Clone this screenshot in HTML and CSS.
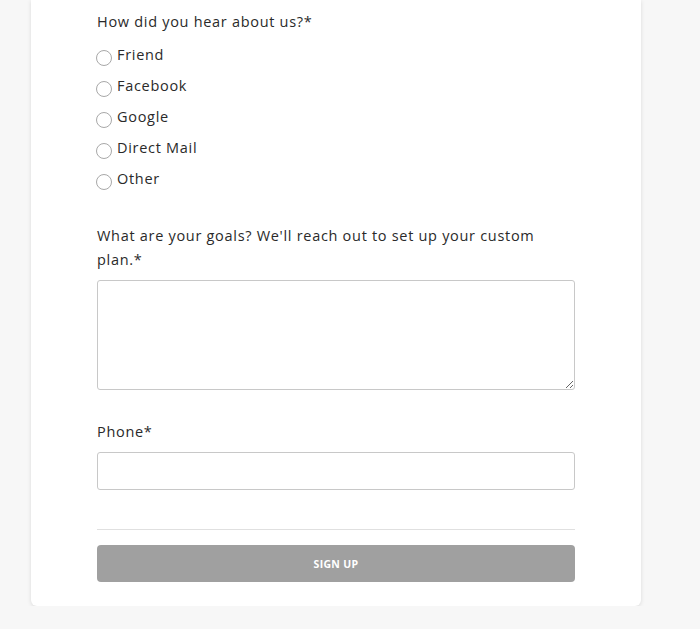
FILE: index.html
```html
<!DOCTYPE html>
<html>
<head>
<meta charset="utf-8">
<link rel="stylesheet" href="styles.css">
</head>
<body>
<div class="card">
  <form class="form">
    <div class="label">How did you hear about us?*</div>
    <div class="radios">
      <label class="radio"><input type="radio" name="src"><span>Friend</span></label>
      <label class="radio"><input type="radio" name="src"><span>Facebook</span></label>
      <label class="radio"><input type="radio" name="src"><span>Google</span></label>
      <label class="radio"><input type="radio" name="src"><span>Direct Mail</span></label>
      <label class="radio"><input type="radio" name="src"><span>Other</span></label>
    </div>
    <div class="label label-goals">What are your goals? We'll reach out to set up your custom plan.*</div>
    <textarea class="textarea"></textarea>
    <div class="label label-phone">Phone*</div>
    <input class="input" type="text">
    <hr class="divider">
    <button type="button" class="button">SIGN UP</button>
  </form>
</div>
</body>
</html>
```
FILE: styles.css
```css
html, body {
  margin: 0;
  padding: 0;
  background: #f7f7f7;
}
body {
  font-family: "Open Sans", "Liberation Sans", sans-serif;
  color: #2a2a2a;
}
.card {
  margin-left: 31px;
  width: 610px;
  background: #fff;
  border-radius: 0 0 6px 6px;
  box-shadow: 0 1px 4px rgba(0,0,0,0.12);
  padding: 10px 0 24px 66px;
  box-sizing: border-box;
}
.form {
  width: 478px;
  display: flex;
  flex-direction: column;
}
.label {
  font-size: 14.5px;
  line-height: 24px;
  letter-spacing: 0.7px;
  color: #2a2a2a;
}
.radios {
  margin-top: 6px;
  display: flex;
  flex-direction: column;
}
.radio {
  height: 31px;
  display: flex;
  align-items: center;
  font-size: 14.5px;
  letter-spacing: 0.7px;
  color: #2a2a2a;
}
.radio input {
  appearance: none;
  -webkit-appearance: none;
  width: 16px;
  height: 16px;
  margin: 4px 5px 0 -1px;
  border: 1px solid #a8a8a8;
  border-radius: 50%;
  background: #fff;
  box-sizing: border-box;
}
.radio span {
  margin-top: -3px;
}
.label-goals {
  margin-top: 29px;
}
.textarea {
  margin-top: 8px;
  height: 110px;
  width: 478px;
  box-sizing: border-box;
  border: 1px solid #c8c8c8;
  border-radius: 3px;
  resize: vertical;
}
.label-phone {
  margin-top: 30px;
}
.input {
  margin-top: 8px;
  height: 38px;
  width: 478px;
  box-sizing: border-box;
  border: 1px solid #c8c8c8;
  border-radius: 3px;
}
.divider {
  margin: 39px 0 0 0;
  border: 0;
  border-top: 1px solid #e0e0e0;
  height: 0;
}
.button {
  margin-top: 15px;
  height: 37px;
  width: 478px;
  border: 0;
  border-radius: 4px;
  background: #a0a0a0;
  color: #fff;
  font-family: "Open Sans", "Liberation Sans", sans-serif;
  font-weight: 700;
  font-size: 10.5px;
  letter-spacing: 0.3px;
  padding-bottom: 1px;
}
```
